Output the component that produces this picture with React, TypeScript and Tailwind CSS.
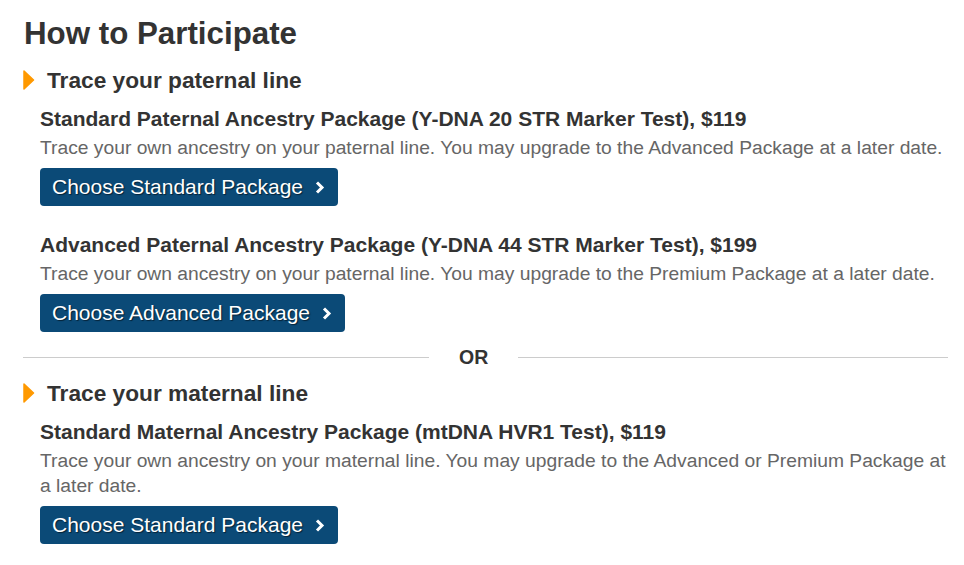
import React from "react";

interface PackageProps {
  title: string;
  description: string;
  button: string;
  className?: string;
}

function Arrow() {
  return (
    <svg width="12" height="20" viewBox="0 0 12 20" className="shrink-0">
      <path d="M1 1 L10.5 10 L1 19 Z" fill="#ff9900" stroke="#ff9900" strokeWidth="1.5" strokeLinejoin="round" />
    </svg>
  );
}

function Chevron() {
  return (
    <svg width="10" height="13" viewBox="0 0 10 13" className="shrink-0">
      <polyline points="2,1.5 7,6.5 2,11.5" fill="none" stroke="#fff" strokeWidth="3" />
    </svg>
  );
}

function SectionTitle({ children, className = "" }: { children: React.ReactNode; className?: string }) {
  return (
    <div className={`flex items-center gap-[12px] ${className}`}>
      <Arrow />
      <h2 className="text-[22.7px] leading-[28px] font-bold text-[#333]">{children}</h2>
    </div>
  );
}

function Package({ title, description, button, className = "" }: PackageProps) {
  return (
    <div className={`pl-[17px] ${className}`}>
      <h3 className="text-[21px] leading-[26px] font-bold text-[#333] mb-[3px]">{title}</h3>
      <p className="text-[19.25px] leading-[25px] text-[#666]">{description}</p>
      <button className="mt-[8px] flex items-center gap-[12px] h-[38px] pl-[12px] pr-[13px] bg-[#0b4a77] rounded-[4px] text-white text-[21px] [text-shadow:1px_1px_1px_rgba(0,0,0,0.55)]">
        {button}
        <Chevron />
      </button>
    </div>
  );
}

export default function App() {
  return (
    <div className="bg-white w-[964px] h-[565px] pl-[23px] pr-[16px] pt-[16px] font-['Liberation_Sans',Arial,sans-serif]">
      <h1 className="text-[31.3px] leading-[36px] font-bold text-[#333] pl-[1px]">How to Participate</h1>
      <SectionTitle className="mt-[14px]">Trace your paternal line</SectionTitle>
      <Package
        className="mt-[12px]"
        title="Standard Paternal Ancestry Package (Y-DNA 20 STR Marker Test), $119"
        description="Trace your own ancestry on your paternal line. You may upgrade to the Advanced Package at a later date."
        button="Choose Standard Package"
      />
      <Package
        className="mt-[26px]"
        title="Advanced Paternal Ancestry Package (Y-DNA 44 STR Marker Test), $199"
        description="Trace your own ancestry on your paternal line. You may upgrade to the Premium Package at a later date."
        button="Choose Advanced Package"
      />
      <div className="flex items-center mt-[13px] h-[24px]">
        <div className="w-[406px] h-px bg-[#cccccc]" />
        <span className="px-[30px] text-[19.5px] leading-[24px] font-bold text-[#333]">OR</span>
        <div className="flex-1 h-px bg-[#cccccc]" />
      </div>
      <SectionTitle className="mt-[10px]">Trace your maternal line</SectionTitle>
      <Package
        className="mt-[12px]"
        title="Standard Maternal Ancestry Package (mtDNA HVR1 Test), $119"
        description="Trace your own ancestry on your maternal line. You may upgrade to the Advanced or Premium Package at a later date."
        button="Choose Standard Package"
      />
    </div>
  );
}
